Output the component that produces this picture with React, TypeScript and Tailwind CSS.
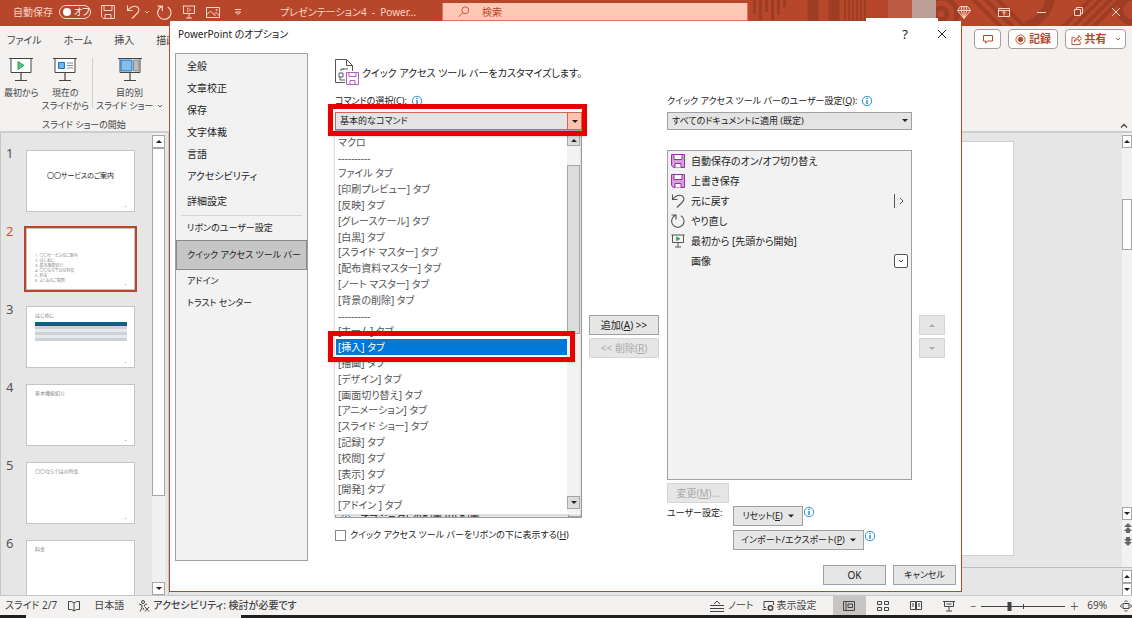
import type { ReactNode } from "react";
import { clsx } from "clsx";

const sidebarTop = ["全般", "文章校正", "保存", "文字体裁", "言語", "アクセシビリティ"];

const tabCommands = [
  "マクロ",
  "----------",
  "ファイル タブ",
  "[印刷プレビュー] タブ",
  "[反映] タブ",
  "[グレースケール] タブ",
  "[白黒] タブ",
  "[スライド マスター] タブ",
  "[配布資料マスター] タブ",
  "[ノート マスター] タブ",
  "[背景の削除] タブ",
  "----------",
  "[ホーム] タブ",
  "[挿入] タブ",
  "[描画] タブ",
  "[デザイン] タブ",
  "[画面切り替え] タブ",
  "[アニメーション] タブ",
  "[スライド ショー] タブ",
  "[記録] タブ",
  "[校閲] タブ",
  "[表示] タブ",
  "[開発] タブ",
  "[アドイン ] タブ",
];

const agenda = ["〇〇サービスのご案内", "はじめに", "基本機能紹介", "〇〇ならではの特長", "料金", "よくあるご質問"];

/* Icons */

function SaveIcon({ className, fill = "none" }: { className?: string; fill?: string }) {
  return (
    <svg viewBox="0 0 14 14" className={className} fill={fill} stroke="currentColor">
      <path d="M.5.5h13v13H2.5l-2-2z" />
      <path d="M3 .5h8v5H3zM4 13.5v-4h6v4" fill={fill === "none" ? "none" : "#fff"} />
    </svg>
  );
}

function UndoIcon({ className }: { className?: string }) {
  return (
    <svg viewBox="0 0 14 14" className={className} fill="none" stroke="currentColor" strokeWidth="1.1">
      <path d="M1.500 .5v5h5M1.800 5.200C4 2.500 6.500 1 9 1.200c4 .3 5 4.300 2.500 6.800L6 13.500" />
    </svg>
  );
}

function RedoIcon({ className }: { className?: string }) {
  return (
    <svg viewBox="0 0 14 14" className={className} fill="none" stroke="currentColor" strokeWidth="1.1">
      <path d="M.5 1h4.500v4.500M4.800 1.300A6.200 6.200 0 1 0 10 1.800" />
    </svg>
  );
}

function SlideShowIcon({ className, play = "none" }: { className?: string; play?: string }) {
  return (
    <svg viewBox="0 0 14 14" className={className} fill="none" stroke="currentColor">
      <path d="M.5 1h13M1.500 1v7.500h11V1M7 8.500v4.500M4 13h6" />
      <path d="M5.500 2.800v4L9 4.800z" fill={play} stroke={play === "none" ? "currentColor" : play} strokeWidth=".6" />
    </svg>
  );
}

function Chevron({ className, up }: { className?: string; up?: boolean }) {
  return (
    <svg viewBox="0 0 8 6" className={clsx("shrink-0", className)} fill="none" stroke="currentColor" strokeWidth="1.300">
      <path d={up ? "M1 4.500l3-3 3 3" : "M1 1.500l3 3 3-3"} />
    </svg>
  );
}

function Triangle({ up, className }: { up?: boolean; className?: string }) {
  return (
    <svg viewBox="0 0 8 4" className={clsx("shrink-0", className ?? "h-1 w-2")} fill="currentColor">
      <path d={up ? "M4 0l4 4H0z" : "M0 0h8L4 4z"} />
    </svg>
  );
}

function InfoIcon() {
  return (
    <svg viewBox="0 0 12 12" className="h-3 w-3 shrink-0 text-[#2b93d1]" fill="none" stroke="currentColor">
      <circle cx="6" cy="6" r="4.700" />
      <path d="M6 5v4M6 2.800v1.200" strokeWidth="1.500" />
    </svg>
  );
}

function MonitorIcon({ kind }: { kind: "play" | "current" | "custom" }) {
  return (
    <svg viewBox="0 0 24 24" className="h-6 w-6" fill="none" stroke="#444">
      <path d="M2 1v13.500h20V1" fill="#fff" />
      <path d="M0 .5h24M12 14.500v8M6 22.500h12" strokeWidth="1.200" />
      {kind === "play" && <path d="M9 3.500v8l6-4z" fill="#5cc489" stroke="#2f9e5b" />}
      {kind === "current" && (
        <>
          <path d="M5.500 4.500h6v6h-6z" fill="#6db5ec" stroke="#1e74bd" />
          <path d="M14 5h6M14 7.500h6M14 10h6" stroke="#888" />
        </>
      )}
      {kind === "custom" && (
        <>
          <path d="M3 2h11v11H3z" fill="#83bdec" stroke="#1e74bd" />
          <path d="M15.500 2H21v11h-5.500z" fill="#bbb" stroke="#888" />
        </>
      )}
    </svg>
  );
}

function TitlePattern() {
  return (
    <svg viewBox="0 0 382 26" className="absolute top-0 right-0 h-[26px] w-[382px]" fill="none" stroke="#9c3d24">
      <path d="M4.500 0v14M10.500 0v20M16.500 0v12M22.500 0v20M28.500 0v15M34.500 0v7" strokeWidth="3" />
      <path d="M63 0v26M84 0v26" strokeWidth="11" />
      <path d="M95 0v22M99 0v22M103 0v22M107 0v22M111 0v22M115 0v22" strokeWidth="2" />
      <circle cx="191" cy="14" r="6" strokeWidth="5" />
      <circle cx="191" cy="14" r="16" strokeWidth="5" />
      <path d="M222-2l30 30M234-2l30 30M246-2l30 30" strokeWidth="4" />
      <path d="M300-4c0 14-8 24-24 30" strokeWidth="9" />
      <path d="M312 28l30-30M322 28l30-30M332 28l30-30M342 28l30-30" strokeWidth="4" />
      <circle cx="382" cy="10" r="12" strokeWidth="6" />
      <path d="M138 0h24v26h-24z" fill="#bb5a42" stroke="none" />
      <path d="M162 0h24v26h-24z" fill="#bca097" stroke="none" />
    </svg>
  );
}

/* Application window behind the dialog */

function TitleBar() {
  return (
    <header className="relative flex h-[26px] shrink-0 items-center bg-[#b7472a] pb-[2px] text-[#fbd5c7]">
      <TitlePattern />
      <label className="ml-[13px] flex items-center gap-[6px] whitespace-nowrap">
        自動保存
        <span className="relative flex h-[14px] w-8 items-center rounded-full border border-[#fbd5c7]">
          <input type="checkbox" className="absolute inset-0 opacity-0" />
          <span className="ml-[3px] h-2 w-2 rounded-full bg-white" />
          <span className="ml-[3px] text-[9px] text-white">オフ</span>
        </span>
      </label>
      <button aria-label="上書き保存" className="ml-[10px]"><SaveIcon className="h-[14px] w-[14px]" /></button>
      <button aria-label="元に戻す" className="ml-[11px] flex items-center gap-1">
        <UndoIcon className="h-[14px] w-[14px]" />
        <Chevron className="h-1 w-[6px]" />
      </button>
      <button aria-label="やり直し" className="ml-[7px]"><RedoIcon className="h-[15px] w-[15px]" /></button>
      <button aria-label="最初から" className="ml-[10px]"><SlideShowIcon className="h-[14px] w-[14px]" /></button>
      <button aria-label="画像" className="ml-[10px]">
        <svg viewBox="0 0 14 12" className="h-3 w-[14px]" fill="none" stroke="currentColor">
          <path d="M.5 1.500h13v10H.5zM.5 9l4-4 5 5M8 8.500l2-2 3.500 3.500" />
          <circle cx="10.500" cy="4" r=".6" />
        </svg>
      </button>
      <button aria-label="クイック アクセス" className="ml-[14px]">
        <svg viewBox="0 0 8 8" className="h-2 w-2" fill="none" stroke="currentColor">
          <path d="M1 1.500h6M1.500 4h5L4 6.500z" />
        </svg>
      </button>
      <h1 className="ml-[38px] w-[162px] shrink-0 whitespace-nowrap">プレゼンテーション4&nbsp; -&nbsp; Power…</h1>
      <label className="relative flex h-[18px] w-[306px] items-center border border-t-0 border-[#d8765c] bg-[#fdc9b5] text-[#b7472a]">
        <svg viewBox="0 0 14 14" className="ml-[15px] h-3 w-3" fill="none" stroke="currentColor">
          <circle cx="8.500" cy="5" r="4" />
          <path d="M5.500 8L1 12.500" />
        </svg>
        <input aria-label="検索" placeholder="検索" className="ml-3 w-40 placeholder:text-[#b7472a]" />
      </label>
      <div className="relative mr-[11px] ml-auto flex items-center gap-[27px]">
        <svg viewBox="0 0 14 13" className="h-[13px] w-[14px]" fill="none" stroke="currentColor">
          <path d="M3.500.5h7l3 4L7 12.500.5 4.500zM.5 4.500h13M7 .5v12M5 .5l-1 4L7 12M9 .5l1 4L7 12" />
        </svg>
        <button aria-label="リボンの表示オプション">
          <svg viewBox="0 0 12 10" className="h-[10px] w-3" fill="none" stroke="currentColor">
            <path d="M.5 1.500h11v8H.5zM.5 3.500h11M6 8.500v-4M4.500 6L6 4.500 7.500 6" />
          </svg>
        </button>
        <button aria-label="最小化">
          <svg viewBox="0 0 10 10" className="h-[10px] w-[10px]" stroke="currentColor"><path d="M0 5.500h9" /></svg>
        </button>
        <button aria-label="元のサイズに戻す">
          <svg viewBox="0 0 10 10" className="h-[10px] w-[10px]" fill="none" stroke="currentColor">
            <path d="M.5 2.500h6v6h-6zM2.500 2.500v-2h6v6h-2" />
          </svg>
        </button>
        <button aria-label="閉じる">
          <svg viewBox="0 0 10 10" className="h-[10px] w-[10px]" stroke="currentColor"><path d="M1 1l8 8M9 1L1 9" /></svg>
        </button>
      </div>
    </header>
  );
}

function RibbonButton({ kind, children }: { kind: "play" | "current" | "custom"; children: ReactNode }) {
  return (
    <button className="flex flex-col items-center gap-[4px] text-[9px] leading-[13px] whitespace-nowrap">
      <MonitorIcon kind={kind} />
      <span>{children}</span>
    </button>
  );
}

function Ribbon() {
  return (
    <div className="relative z-10 flex h-[107px] shrink-0 justify-between border-b-2 border-[#cfcdcb] bg-[#f3f2f1] text-[#444]">
      <div>
        <nav className="flex h-7 items-center gap-[22px] pl-[7px] whitespace-nowrap">
          <a href="#file">ファイル</a>
          <a href="#home">ホーム</a>
          <a href="#insert">挿入</a>
          <a href="#draw">描画</a>
        </nav>
        <div className="flex items-start gap-[3px] pt-1 pl-1">
          <RibbonButton kind="play">最初から</RibbonButton>
          <RibbonButton kind="current">現在の<br />スライドから</RibbonButton>
          <span className="h-[50px] w-px bg-[#d2d0ce]" />
          <RibbonButton kind="custom">
            目的別<br />
            <span className="flex items-center gap-1">スライド ショー<Chevron className="h-1 w-[6px]" /></span>
          </RibbonButton>
        </div>
        <p className="pl-[42px] text-[9px] leading-[26px]">スライド ショーの開始</p>
      </div>
      <div className="flex flex-col items-end justify-between">
        <div className="flex gap-[7px] pt-[3px] pr-[6px] text-[11px] font-bold text-[#b7472a]">
          <button aria-label="コメント" className="flex h-5 w-[27px] items-center justify-center rounded border border-[#a19f9d] bg-white">
            <svg viewBox="0 0 10 10" className="h-[10px] w-[10px]" fill="none" stroke="currentColor">
              <path d="M.5 1.500h9v5.500H5L2.500 9V7h-2z" />
            </svg>
          </button>
          <button className="flex h-5 w-[50px] items-center justify-center gap-[3px] rounded border border-[#a19f9d] bg-white">
            <svg viewBox="0 0 12 12" className="h-[11px] w-[11px]" fill="none" stroke="currentColor">
              <circle cx="6" cy="6" r="5" />
              <circle cx="6" cy="6" r="2.500" fill="currentColor" />
            </svg>
            記録
          </button>
          <button className="flex h-5 w-[61px] items-center justify-center gap-[3px] rounded border border-[#a19f9d] bg-white">
            <svg viewBox="0 0 12 12" className="h-[11px] w-[11px]" fill="none" stroke="currentColor">
              <path d="M4 4H1v7.500h9V8M3.500 8.500c.5-3 2-4.500 5-4.500V1.500L11.500 5 8.500 8V6c-2 0-4 .5-5 2.500z" />
            </svg>
            共有
            <Chevron className="ml-[5px] h-1 w-[6px]" />
          </button>
        </div>
        <button aria-label="リボンを折りたたむ" className="mr-1 mb-[2px]"><Chevron up className="h-[6px] w-2" /></button>
      </div>
    </div>
  );
}

function ScrollArrow({ up }: { up?: boolean }) {
  return (
    <button
      aria-label={up ? "上へ" : "下へ"}
      className="flex h-[13px] w-full shrink-0 items-center justify-center border border-[#a6a6a6] bg-white text-[#222]"
    >
      <Triangle up={up} className="h-[3px] w-[6px]" />
    </button>
  );
}

function Thumb({ n, active, children }: { n: number; active?: boolean; children?: ReactNode }) {
  return (
    <li className="flex h-[62px] shrink-0">
      <span className={clsx("w-[25px] pl-[5px] text-[13px] leading-[7px]", active ? "text-[#d35230]" : "text-[#555]")}>{n}</span>
      <div
        className={clsx(
          "relative w-[109px] border border-[#c4c4c4] bg-white text-[5px] text-[#888]",
          active && "outline-2 outline-[#b7472a]"
        )}
      >
        {children}
        <span className="absolute right-2 bottom-1 h-px w-px bg-[#999]" />
      </div>
    </li>
  );
}

function SlidePanel() {
  return (
    <aside className="flex w-[169px] shrink-0 border-r border-l border-[#c8c6c4]">
      <ol className="flex flex-1 flex-col gap-4 overflow-hidden pt-[17px]">
        <Thumb n={1}>
          <p className="pt-[21px] text-center text-[7px] leading-[8px] text-[#222]">〇〇サービスのご案内</p>
        </Thumb>
        <Thumb n={2} active>
          <ol className="list-inside list-decimal pt-6 pl-2 text-[4px] leading-[5px]">
            {agenda.map((line) => <li key={line}>{line}</li>)}
          </ol>
        </Thumb>
        <Thumb n={3}>
          <p className="px-2 pt-1 leading-[8px]">はじめに</p>
          <table className="mx-2 mt-[3px] w-[92px] border-collapse">
            <thead>
              <tr className="h-1 bg-[#156082]"><th /><th /><th /></tr>
            </thead>
            <tbody>
              {[1, 2, 3, 4, 5].map((row) => (
                <tr key={row} className="h-[3px] odd:bg-[#ccd2d8] even:bg-[#e7eaed]"><td /><td /><td /></tr>
              ))}
            </tbody>
          </table>
        </Thumb>
        <Thumb n={4}><p className="px-2 pt-1 leading-[8px]">基本機能紹介</p></Thumb>
        <Thumb n={5}><p className="px-2 pt-1 leading-[8px]">〇〇ならではの特長</p></Thumb>
        <Thumb n={6}><p className="px-2 pt-1 leading-[8px]">料金</p></Thumb>
      </ol>
      <div className="mr-[3px] flex w-[13px] flex-col bg-[#f0f0f0] pt-[2px]">
        <ScrollArrow up />
        <div className="h-[348px] border border-[#a6a6a6] bg-white" />
        <div className="flex-1" />
        <ScrollArrow />
      </div>
    </aside>
  );
}

function Editor() {
  return (
    <main className="flex min-w-0 flex-1 flex-col">
      <div className="flex flex-1">
        <div className="mt-2 mr-[108px] mb-[11px] flex-1 border border-[#cfcfcf] bg-white" />
        <div className="flex w-[10px] flex-col bg-[#f2f2f2] pt-[2px]">
          <ScrollArrow up />
          <div className="mt-[51px] h-[51px] border border-[#a6a6a6] bg-white" />
          <div className="flex-1" />
          <ScrollArrow />
          <svg viewBox="0 0 10 26" className="mt-[2px] mb-[19px] h-[26px] w-[10px]" fill="#666">
            <path d="M6 1l4 4H2zM6 5l4 4H2zM4 9h4v2H4zM4 15h4v2H4zM2 17h8l-4 4zM2 20h8l-4 4z" />
          </svg>
        </div>
      </div>
      <div className="flex h-7 shrink-0 justify-end border-t border-[#bdbdbd]">
        <div className="w-[10px] pt-[2px]">
          <ScrollArrow up />
          <ScrollArrow />
        </div>
      </div>
    </main>
  );
}

function StatusBar() {
  return (
    <footer className="shrink-0">
      <div className="flex h-5 items-center border-t border-[#c8c6c4] bg-[#f3f2f1] pl-[5px] whitespace-nowrap text-[#444]">
        <span className="pb-[2px]">スライド 2/7</span>
        <svg viewBox="0 0 12 12" className="ml-[11px] h-3 w-3" fill="none" stroke="currentColor">
          <path d="M.5 1.500h3L6 3l2.500-1.500h3v8h-3L6 11 3.500 9.500h-3zM6 3v8" />
        </svg>
        <span className="ml-[14px] pb-[2px]">日本語</span>
        <svg viewBox="0 0 12 12" className="ml-[14px] h-3 w-3" fill="none" stroke="currentColor">
          <circle cx="5" cy="2" r="1.500" />
          <path d="M1 4l3 1v3l-2 3.500M9 4L6.500 5v1.500M5 8l1 2M7 7l4 4.500M11 7l-4 4.500" />
        </svg>
        <span className="ml-[3px] pb-[2px] font-medium">アクセシビリティ: 検討が必要です</span>
        <div className="ml-auto flex h-full items-center">
          <button className="flex items-center gap-1">
            <svg viewBox="0 0 14 12" className="h-3 w-[14px]" fill="none" stroke="currentColor">
              <path d="M4 4l3-3 3 3M0 5.500h14M0 8.500h14M0 11.500h14" />
            </svg>
            <span className="pb-[2px]">ノート</span>
          </button>
          <button className="ml-[8px] flex items-center gap-[3px]">
            <svg viewBox="0 0 12 12" className="h-3 w-3" fill="none" stroke="currentColor">
              <path d="M4 7.500H2v-6h9.500V5M.5 9.500h4" />
              <circle cx="8.500" cy="8" r="2.200" strokeWidth="1.500" />
            </svg>
            <span className="pb-[2px]">表示設定</span>
          </button>
          <button aria-label="標準" className="ml-4 flex h-full w-[33px] items-center justify-center bg-[#c8c6c4]">
            <svg viewBox="0 0 12 10" className="h-[10px] w-3" fill="none" stroke="currentColor">
              <path d="M.5.5h11v9H.5zM3 .5v9M5 3h4.500v3.500H5z" />
            </svg>
          </button>
          <button aria-label="スライド一覧" className="ml-[11px]">
            <svg viewBox="0 0 12 10" className="h-[10px] w-3" fill="none" stroke="currentColor">
              <path d="M.5.5h4v3h-4zM7.500.5h4v3h-4zM.5 6.500h4v3h-4zM7.500 6.500h4v3h-4z" />
            </svg>
          </button>
          <button aria-label="閲覧表示" className="ml-[21px]">
            <svg viewBox="0 0 12 10" className="h-[10px] w-3" fill="none" stroke="currentColor">
              <path d="M.5.500h5v8h-5zM6.500.5h5v8h-5zM6 .5v9M2 3h2M2 5h2M8 3h2M8 5h2" />
            </svg>
          </button>
          <button aria-label="スライド ショー" className="ml-[21px]">
            <svg viewBox="0 0 12 12" className="h-3 w-3" fill="none" stroke="currentColor">
              <path d="M0 1.500h12M1.500 1.500v5h9v-5M3.500 4h5M6 6.500v4M3 11h6" />
            </svg>
          </button>
          <button aria-label="縮小" className="ml-4">−</button>
          <svg viewBox="0 0 84 10" className="ml-[5px] h-[10px] w-[84px]" stroke="currentColor">
            <path d="M0 5.500h84M42.500 3v5" />
            <path d="M28.500 1v9" strokeWidth="4" />
          </svg>
          <button aria-label="拡大" className="ml-1">＋</button>
          <span className="ml-2 pb-[2px]">69%</span>
          <svg viewBox="0 0 12 12" className="ml-[13px] h-3 w-3" fill="none" stroke="currentColor">
            <path d="M3 3.500h6v5H3zM4.500 2L6 .5 7.500 2M4.500 10L6 11.500 7.500 10M1.500 4.500L.5 6l1 1.500M10.500 4.500l1 1.500-1 1.500" />
          </svg>
        </div>
      </div>
      <div className="flex h-[3px] bg-[#201f1e]">
        <div className="ml-[26px] w-[215px] bg-[#f3f2f1]" />
      </div>
    </footer>
  );
}

/* Options dialog */

function DialogButton({ children, disabled, className }: { children: ReactNode; disabled?: boolean; className?: string }) {
  return (
    <button
      disabled={disabled}
      className={clsx(
        "flex h-5 shrink-0 items-center justify-center border bg-[#e6e6e6]",
        disabled ? "border-[#d6d6d6] text-[#aaa]" : "border-[#a0a0a0] text-[#222]",
        className
      )}
    >
      {children}
    </button>
  );
}

function Sidebar() {
  return (
    <nav className="w-[133px] shrink-0 border border-[#a0a0a0] bg-[#f2f2f2] pt-px">
      {sidebarTop.map((label) => (
        <a key={label} href="#page" className="flex h-[22px] items-center pl-[11px]">{label}</a>
      ))}
      <a href="#page" className="flex h-7 items-center pl-[11px]">詳細設定</a>
      <hr className="mx-[5px] border-[#d4d4d4]" />
      <a href="#page" className="flex h-6 items-center pl-[11px] text-[9px]">リボンのユーザー設定</a>
      <a href="#page" className="flex h-[30px] items-center border border-[#8a8a8a] bg-[#c6c6c6] pl-[10px] text-[9px] whitespace-nowrap">
        クイック アクセス ツール バー
      </a>
      <a href="#page" className="flex h-[22px] items-center pl-[11px] text-[9px]">アドイン</a>
      <a href="#page" className="flex h-[22px] items-center pl-[11px] text-[9px]">トラスト センター</a>
    </nav>
  );
}

function CommandDropdown() {
  return (
    <div className="absolute top-[21px] -left-px flex h-[382px] w-[247px] border border-[#e0e0e0] bg-white pb-px shadow-sm">
      <ul role="listbox" aria-label="コマンドの選択" className="flex flex-1 flex-col pl-px">
        {tabCommands.map((label, i) => (
          <li
            key={i}
            role="option"
            aria-selected={label === "[挿入] タブ"}
            className={clsx(
              "flex min-h-0 flex-1 items-center pl-[2px] whitespace-pre",
              label === "[挿入] タブ" ? "bg-[#0078d7] text-white" : "text-[#555]"
            )}
          >
            {label}
          </li>
        ))}
      </ul>
      <div className="flex w-[13px] flex-col bg-[#f2f2f2]">
        <div className="flex h-[12px] items-center justify-center border border-[#a6a6a6] bg-[#dcdcdc]">
          <Triangle up className="h-[3px] w-[6px]" />
        </div>
        <div className="mt-[19px] h-[169px] border border-[#a6a6a6] bg-[#dcdcdc]" />
        <div className="flex-1" />
        <div className="mb-1 flex h-[13px] items-center justify-center border border-[#a6a6a6] bg-[#dcdcdc]">
          <Triangle className="h-[3px] w-[6px]" />
        </div>
      </div>
      <div className="absolute -top-[30px] -left-[7px] h-[32px] w-[259px] border-[5px] border-[#e60000] shadow" />
      <div className="absolute top-[197px] -left-[7px] h-[31px] w-[247px] border-[5px] border-[#e60000] shadow" />
    </div>
  );
}

function CommandColumn() {
  return (
    <div className="w-[247px] shrink-0">
      <label htmlFor="source" className="flex h-[16px] items-center gap-1 text-[9px]">
        <span>コマンドの選択(C):</span>
        <InfoIcon />
      </label>
      <div className="relative mt-[3px]">
        <select
          id="source"
          className="block h-[18px] w-full appearance-none border border-[#d0694f] bg-[#e4e4e4] pl-1 text-[9px] text-[#222]"
        >
          <option>基本的なコマンド</option>
        </select>
        <span className="pointer-events-none absolute inset-y-0 right-0 flex w-[15px] items-center justify-center border border-[#d0694f] bg-[#fdc3ae]">
          <Triangle className="h-[3px] w-[6px]" />
        </span>
        <CommandDropdown />
      </div>
      <div className="flex h-[388px] items-end justify-between border border-[#a0a0a0] bg-[#f2f2f2]">
        <span className="flex h-1 items-start gap-2 overflow-hidden pl-1 leading-[10px]">
          <InfoIcon />
          オブジェクトの配置 (P) 配置
        </span>
        <span className="h-[5px] w-[13px] border border-[#a6a6a6] bg-white" />
      </div>
      <label className="mt-[10px] flex items-center gap-[4px] text-[9px] whitespace-nowrap">
        <input type="checkbox" className="h-[11px] w-[11px] shrink-0 appearance-none border border-[#888] bg-white" />
        <span>クイック アクセス ツール バーをリボンの下に表示する(<u>H</u>)</span>
      </label>
    </div>
  );
}

function ToolbarItem({ icon, children, mark }: { icon?: ReactNode; children: ReactNode; mark?: ReactNode }) {
  return (
    <li className="flex h-5 items-center pr-[3px] pl-[3px]">
      <span className="flex w-[20px] text-[#555]">{icon}</span>
      <span className="flex-1">{children}</span>
      {mark}
    </li>
  );
}

function ToolbarColumn() {
  return (
    <div className="w-[245px] shrink-0">
      <label htmlFor="target" className="flex h-[16px] items-center gap-1 text-[9px] whitespace-nowrap">
        <span>クイック アクセス ツール バーのユーザー設定(<u>Q</u>):</span>
        <InfoIcon />
      </label>
      <div className="relative mt-[3px]">
        <select id="target" className="block h-[18px] w-full appearance-none border border-[#a0a0a0] bg-[#e4e4e4] pl-1 text-[9px] text-[#222]">
          <option>すべてのドキュメントに適用 (既定)</option>
        </select>
        <Triangle className="pointer-events-none absolute top-[7px] right-1 h-[3px] w-[6px]" />
      </div>
      <ul className="mt-5 h-[330px] border border-[#a0a0a0] bg-[#f2f2f2]">
        <ToolbarItem icon={<SaveIcon className="h-[14px] w-[14px] text-[#9b30a3]" fill="#dc9be0" />}>自動保存のオン/オフ切り替え</ToolbarItem>
        <ToolbarItem icon={<SaveIcon className="h-[14px] w-[14px] text-[#9b30a3]" fill="#dc9be0" />}>上書き保存</ToolbarItem>
        <ToolbarItem
          icon={<UndoIcon className="h-[14px] w-[14px]" />}
          mark={
            <svg viewBox="0 0 14 14" className="h-[14px] w-[14px]" fill="none" stroke="#555">
              <path d="M.5 0v14M6 4l3 3-3 3" />
            </svg>
          }
        >
          元に戻す
        </ToolbarItem>
        <ToolbarItem icon={<RedoIcon className="h-[14px] w-[14px]" />}>やり直し</ToolbarItem>
        <ToolbarItem icon={<SlideShowIcon className="h-[14px] w-[14px]" play="#2f9e5b" />}>最初から [先頭から開始]</ToolbarItem>
        <ToolbarItem
          mark={
            <span className="flex h-[14px] w-[14px] items-center justify-center rounded-xs border border-[#555] bg-white">
              <Chevron className="h-1 w-[6px]" />
            </span>
          }
        >
          画像
        </ToolbarItem>
      </ul>
      <DialogButton disabled className="mt-[3px] w-[62px]"><span>変更(<u>M</u>)...</span></DialogButton>
      <div className="mt-[3px] flex text-[9px]">
        <span className="w-[66px] leading-[14px]">ユーザー設定:</span>
        <div className="flex flex-col gap-1">
          <div className="flex">
            <DialogButton className="w-[70px] gap-[5px]"><span>リセット(<u>E</u>)</span><Triangle className="h-1 w-[6px]" /></DialogButton>
            <InfoIcon />
          </div>
          <div className="flex">
            <DialogButton className="w-[131px] gap-[5px] whitespace-nowrap">
              <span>インポート/エクスポート(<u>P</u>)</span><Triangle className="h-1 w-[6px]" />
            </DialogButton>
            <InfoIcon />
          </div>
        </div>
      </div>
    </div>
  );
}

function OptionsDialog() {
  return (
    <div
      role="dialog"
      aria-label="PowerPoint のオプション"
      className="absolute top-[21px] right-[170px] bottom-[26px] left-[169px] z-20 flex flex-col border border-t-0 border-[#b7472a] bg-white text-[#222]"
    >
      <div className="absolute -top-[3px] right-[23px] h-[3px] w-[72px] bg-white" />
      <div className="flex h-8 shrink-0 items-center pb-[6px] pl-2">
        <h2>PowerPoint のオプション</h2>
        <button aria-label="ヘルプ" className="ml-auto text-[13px]">?</button>
        <button aria-label="閉じる" className="mr-[14px] ml-[29px]">
          <svg viewBox="0 0 10 10" className="h-[10px] w-[10px]" stroke="currentColor"><path d="M1 1l8 8M9 1L1 9" /></svg>
        </button>
      </div>
      <div className="flex min-h-0 flex-1 pl-[5px]">
        <Sidebar />
        <div className="flex-1 pt-[6px] pl-[27px]">
          <div className="flex items-center gap-[3px]">
            <svg viewBox="0 0 24 27" className="h-[27px] w-6" fill="none" stroke="#555">
              <path d="M10 23.500H.5V.5h11l6 6V12M11.500.5v6h6" />
              <path d="M4 14h4v4H4zM8 10h5M6 12v-2h3M5 18v3h5" />
              <path d="M11.500 13.500h12v12h-12z" fill="#fff" stroke="#b05fba" />
              <path d="M14 13.500h7v4h-7zM15 25.500v-4h5v4" stroke="#b05fba" />
            </svg>
            <h3>クイック アクセス ツール バーをカスタマイズします。</h3>
          </div>
          <div className="mt-[7px] flex">
            <CommandColumn />
            <div className="mt-[222px] ml-[7px] flex flex-col gap-[3px]">
              <DialogButton className="w-[70px]"><span>追加(<u>A</u>) &gt;&gt;</span></DialogButton>
              <DialogButton disabled className="w-[70px]"><span>&lt;&lt; 削除(<u>R</u>)</span></DialogButton>
            </div>
            <div className="ml-2"><ToolbarColumn /></div>
            <div className="mt-[222px] ml-[7px] flex flex-col gap-[3px]">
              <DialogButton disabled className="w-[26px]"><Triangle up className="h-[3px] w-[6px]" /></DialogButton>
              <DialogButton disabled className="w-[26px]"><Triangle className="h-[3px] w-[6px]" /></DialogButton>
            </div>
          </div>
        </div>
      </div>
      <div className="flex shrink-0 justify-end gap-[7px] pt-1 pr-[5px] pb-[6px]">
        <DialogButton className="w-[63px]">OK</DialogButton>
        <DialogButton className="w-[63px] text-[9px]">キャンセル</DialogButton>
      </div>
    </div>
  );
}

export default function App() {
  return (
    <div
      lang="ja"
      className="relative flex h-screen flex-col overflow-hidden bg-[#e6e6e6] font-['Noto_Sans','Noto_Sans_CJK_JP',sans-serif] text-[10px] leading-[14px] [font-feature-settings:'palt']"
    >
      <TitleBar />
      <Ribbon />
      <div className="flex min-h-0 flex-1">
        <SlidePanel />
        <Editor />
      </div>
      <StatusBar />
      <OptionsDialog />
    </div>
  );
}
